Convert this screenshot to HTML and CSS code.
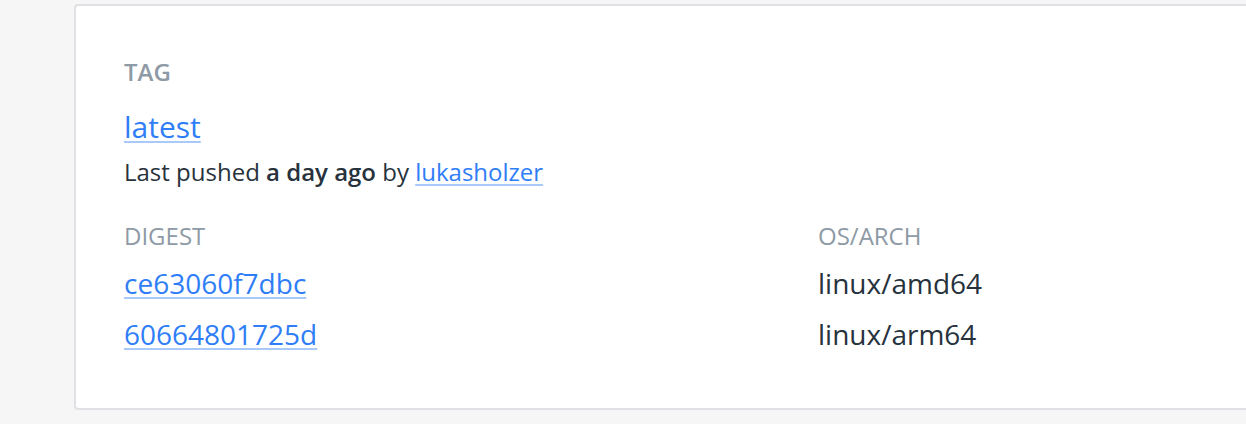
FILE: index.html
```html
<!DOCTYPE html>
<html>
<head>
<meta charset="utf-8">
<link rel="stylesheet" href="styles.css">
</head>
<body>
<div class="page">
  <section class="card">
    <div class="label tag-label">TAG</div>
    <div class="tag-name"><a href="#">latest</a></div>
    <p class="pushed">Last pushed <strong>a day ago</strong> by <a href="#">lukasholzer</a></p>
    <div class="table">
      <div class="col digest">
        <div class="label">DIGEST</div>
        <a class="value" href="#">ce63060f7dbc</a>
        <a class="value" href="#">60664801725d</a>
      </div>
      <div class="col arch">
        <div class="label">OS/ARCH</div>
        <div class="value">linux/amd64</div>
        <div class="value">linux/arm64</div>
      </div>
    </div>
  </section>
</div>
</body>
</html>
```

FILE: styles.css
```css
html, body {
  margin: 0;
  padding: 0;
  background: #f6f6f6;
  font-family: "Open Sans", "Noto Sans", sans-serif;
  color: #27323c;
}
.page {
  padding: 4px 0 0 74px;
  overflow: hidden;
  height: 420px;
}
.card {
  background: #fff;
  border: 2px solid #e1e1e5;
  border-right: none;
  border-radius: 4px 0 0 4px;
  padding: 50px 0 54px 48px;
}
a {
  color: #2f7ef7;
  text-decoration: underline;
  text-decoration-color: #a9c9fb;
  text-underline-offset: 3px;
  text-decoration-thickness: 2px;
}
.label {
  color: #8e9aa5;
  text-transform: uppercase;
  font-size: 24px;
  line-height: 32px;
}
.tag-label {
  font-weight: 600;
}
.tag-name {
  margin-top: 19px;
  font-size: 30px;
  line-height: 40px;
}
.pushed {
  margin: 9px 0 0;
  font-size: 24px;
  line-height: 32px;
}
.pushed strong {
  font-weight: 600;
}
.table {
  display: flex;
  margin-top: 32px;
}
.col {
  display: flex;
  flex-direction: column;
  align-items: flex-start;
}
.digest {
  width: 694px;
}
.col .value {
  font-size: 28px;
  line-height: 40px;
  margin-top: 11px;
}
.arch .value {
  color: #27323c;
}
```
